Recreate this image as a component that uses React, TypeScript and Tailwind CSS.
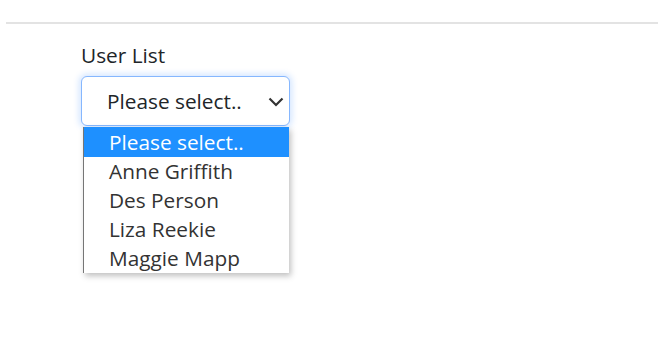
const users = ['Anne Griffith', 'Des Person', 'Liza Reekie', 'Maggie Mapp']

export default function App() {
  return (
    <div className="w-[658px] h-[337px] bg-white text-[#212529] overflow-hidden" style={{ fontFamily: '"Open Sans", sans-serif' }}>
      <div className="pt-[22px] pl-[6px]">
        <div className="h-[2px] bg-[#e3e3e3]" />
      </div>

      <div className="pl-[81px] pt-[17px]">
        <div className="text-[20.8px] leading-[28px] h-[35px]">User List</div>

        <div className="relative w-[209px]">
          {/* closed select, focused */}
          <div className="h-[50px] rounded-[6px] border border-[#86b7fe] bg-white shadow-[0_0_6px_2px_rgba(13,110,253,0.18)] flex items-center pl-[25px] pr-[5px]">
            <span className="flex-1 text-[20.8px] leading-none">Please select..</span>
            <svg width="16" height="10" viewBox="0 0 16 10" className="mt-[2px]">
              <polyline points="1.5,1.5 8,8 14.5,1.5" fill="none" stroke="#333" strokeWidth="2.2" />
            </svg>
          </div>

          {/* open options list */}
          <div className="absolute left-[2px] top-[51px] w-[206px] bg-white border-l border-[#767676] shadow-[2px_3px_6px_rgba(0,0,0,0.25)]">
            <div className="h-[30px] bg-[#1e90ff] text-white text-[20.8px] leading-[30px] pl-[25px]">Please select..</div>
            {users.map(u => (
              <div key={u} className="h-[29px] text-[20.8px] leading-[29px] pl-[25px] text-[#333]">{u}</div>
            ))}
          </div>
        </div>
      </div>
    </div>
  )
}
